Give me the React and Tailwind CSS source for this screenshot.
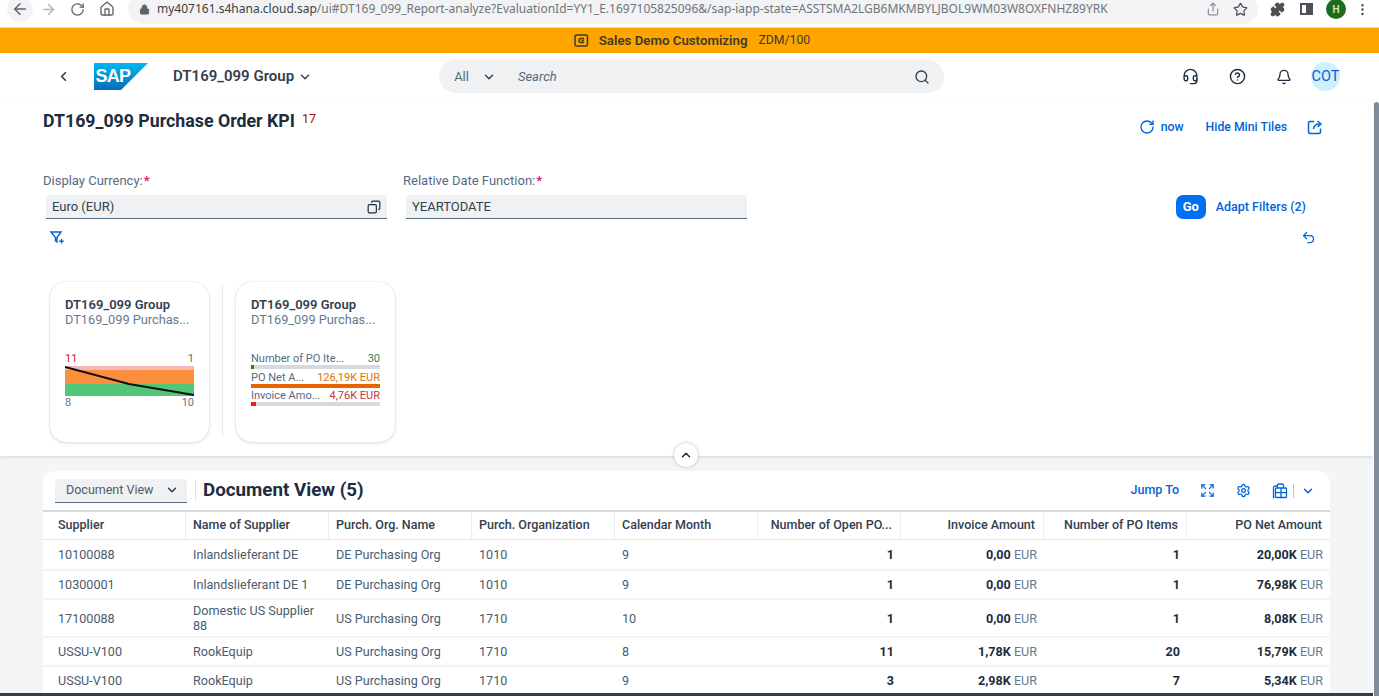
import { ChevronDown, ChevronLeft, ChevronUp, RotateCw, Search, Bell, CircleHelp, Headset, Undo2, Settings, Expand, Copy, ArrowLeft, ArrowRight, Home, Lock, Share, Star, Puzzle, MoreVertical } from 'lucide-react'

const COLUMNS = [
  { label: 'Supplier', w: 'w-[143px]' },
  { label: 'Name of Supplier', w: 'w-[143px]' },
  { label: 'Purch. Org. Name', w: 'w-[143px]' },
  { label: 'Purch. Organization', w: 'w-[143px]' },
  { label: 'Calendar Month', w: 'w-[143px]' },
  { label: 'Number of Open PO...', w: 'w-[143px]', right: true },
  { label: 'Invoice Amount', w: 'w-[143px]', right: true },
  { label: 'Number of PO Items', w: 'w-[143px]', right: true },
  { label: 'PO Net Amount', w: 'flex-1', right: true },
]

const ROWS = [
  { h: 'h-[31px]', cells: ['10100088', 'Inlandslieferant DE', 'DE Purchasing Org', '1010', '9', '1', '0,00', '1', '20,00K'] },
  { h: 'h-[29px]', cells: ['10300001', 'Inlandslieferant DE 1', 'DE Purchasing Org', '1010', '9', '1', '0,00', '1', '76,98K'] },
  { h: 'h-[38px]', cells: ['17100088', 'Domestic US Supplier 88', 'US Purchasing Org', '1710', '10', '1', '0,00', '1', '8,08K'] },
  { h: 'h-[29px]', cells: ['USSU-V100', 'RookEquip', 'US Purchasing Org', '1710', '8', '11', '1,78K', '20', '15,79K'] },
  { h: 'h-[29px]', cells: ['USSU-V100', 'RookEquip', 'US Purchasing Org', '1710', '9', '3', '2,98K', '7', '5,34K'] },
]

function SapLogo() {
  return (
    <svg width="54" height="27" viewBox="0 0 54 27">
      <defs>
        <linearGradient id="sapBlue" x1="0" y1="0" x2="0" y2="1">
          <stop offset="0" stopColor="#00b8f1" />
          <stop offset="1" stopColor="#0a6ab8" />
        </linearGradient>
      </defs>
      <polygon points="0,0 54,0 27,27 0,27" fill="url(#sapBlue)" />
      <text x="1.5" y="19" fill="#fff" fontSize="18" fontWeight="800" fontFamily="Liberation Sans, sans-serif" letterSpacing="-0.8">SAP</text>
    </svg>
  )
}

function BrowserBar() {
  return (
    <div className="h-[27px] bg-white overflow-hidden text-[#5f6368]">
      <div className="h-[18px] flex items-center">
        <div className="w-[26px] h-[26px] rounded-full bg-[#f1f3f4] ml-[7px] flex items-center justify-center shrink-0">
          <ArrowLeft size={18} />
        </div>
        <ArrowRight size={17} className="ml-[7px] text-[#b4b7bb] shrink-0" />
        <RotateCw size={15} className="ml-[13px] shrink-0" />
        <Home size={16} className="ml-[14px] shrink-0" />
        <div className="ml-[13px] w-[1130px] h-[30px] bg-[#f1f3f4] rounded-full flex items-center pl-[11px] pr-[10px] shrink-0">
          <Lock size={11} className="fill-[#5f6368] shrink-0" />
          <span className="ml-[7px] text-[12px] whitespace-nowrap text-[#3c4043] flex-1 overflow-hidden font-['Noto_Sans',sans-serif]">
            my407161.s4hana.cloud.sap<span className="text-[#70757a]">/ui#DT169_099_Report-analyze?EvaluationId=YY1_E.1697105825096&amp;/sap-iapp-state=ASSTSMA2LGB6MKMBYLJBOL9WM03W8OXFNHZ89YRK</span>
          </span>
          <Share size={14} className="text-[#8a8d91] shrink-0" />
          <Star size={15} className="ml-[13px] text-[#4d5156] shrink-0" />
        </div>
        <Puzzle size={15} className="ml-[12px] fill-[#4d5156] text-[#4d5156] shrink-0" />
        <div className="ml-[15px] w-[13px] h-[12px] border-2 border-[#4d5156] flex justify-end shrink-0">
          <div className="w-[5px] bg-[#4d5156]" />
        </div>
        <div className="ml-[13px] w-[20px] h-[20px] rounded-full bg-[#1e6b1e] text-[#cfe8cf] text-[10px] font-semibold flex items-center justify-center shrink-0">H</div>
        <MoreVertical size={15} className="ml-[9px] shrink-0 text-[#4d5156]" />
      </div>
    </div>
  )
}

function ShellBar() {
  return (
    <div className="h-[47px] flex items-center relative">
      <ChevronLeft size={15} strokeWidth={2.5} className="ml-[56px] text-[#32363a]" />
      <div className="ml-[23px]"><SapLogo /></div>
      <span className="ml-[25px] text-[15px] font-semibold text-[#32404f]">DT169_099 Group</span>
      <ChevronDown size={14} strokeWidth={2.5} className="ml-[4px] text-[#32404f]" />
      <div className="ml-[127px] w-[505px] h-[33px] rounded-full bg-[#eff1f2] flex items-center pl-[15px] pr-[14px] text-[#556b82] text-[13px]">
        <span>All</span>
        <ChevronDown size={14} strokeWidth={2.5} className="ml-[13px] text-[#32404f]" />
        <span className="ml-[22px] italic flex-1">Search</span>
        <Search size={16} className="text-[#32404f]" />
      </div>
      <div className="ml-auto flex items-center mr-[39px] text-[#1d2d3e]">
        <Headset size={17} />
        <CircleHelp size={17} className="ml-[30px]" />
        <Bell size={16} className="ml-[30px]" />
        <div className="ml-[19px] w-[29px] h-[29px] rounded-full bg-[#d1efff] text-[#0064d9] text-[14.5px] flex items-center justify-center">COT</div>
      </div>
    </div>
  )
}

function FilterField({ label, value, width, icon }) {
  return (
    <div style={{ width }}>
      <div className="text-[13px] text-[#556b82] leading-[16px]">
        {label}<span className="text-[#d6177c] font-bold ml-[1px]">*</span>
      </div>
      <div className="ml-[3px] mt-[6px] h-[24px] bg-[#eff1f2] rounded-t-[4px] border-b border-[#556b82] flex items-center pl-[6px] pr-[6px] text-[13px] text-[#32404f] justify-between">
        <span>{value}</span>
        {icon}
      </div>
    </div>
  )
}

function KpiTileOne() {
  return (
    <div className="mt-[25px]">
      <div className="flex justify-between text-[11px] leading-[13px]">
        <span className="text-[#d32030]">11</span>
        <span className="text-[#38854f]">1</span>
      </div>
      <svg width="129" height="30" viewBox="0 0 129 30" className="block mt-[1px]">
        <rect x="0" y="0" width="129" height="4" fill="#f5b8b8" />
        <rect x="0" y="4" width="129" height="14" fill="#fb8f3c" />
        <rect x="0" y="18" width="129" height="12" fill="#52c777" />
        <polyline points="0,1 64,18 129,29" fill="none" stroke="#111" strokeWidth="2" />
      </svg>
      <div className="flex justify-between text-[11px] leading-[13px] text-[#6a7682]">
        <span>8</span>
        <span>10</span>
      </div>
    </div>
  )
}

function MiniBar({ label, value, color, barColor, fill }) {
  return (
    <div className="mb-[1.5px]">
      <div className="flex justify-between text-[11px] leading-[13px] whitespace-nowrap">
        <span className="text-[#556b82]">{label}</span>
        <span style={{ color }}>{value}</span>
      </div>
      <div className="h-[4px] bg-[#d5dadf]">
        <div className="h-full" style={{ width: fill, background: barColor }} />
      </div>
    </div>
  )
}

function KpiTileTwo() {
  return (
    <div className="mt-[25px]">
      <MiniBar label="Number of PO Ite..." value="30" color="#38854f" barColor="#188918" fill="3px" />
      <MiniBar label="PO Net A..." value="126,19K EUR" color="#df6e0c" barColor="#e76500" fill="100%" />
      <MiniBar label="Invoice Amo..." value="4,76K EUR" color="#c7323c" barColor="#ee1c25" fill="5px" />
    </div>
  )
}

function Tile({ subtitle, children }) {
  return (
    <div className="w-[159px] h-[160px] rounded-[16px] bg-white shadow-[0_0_2px_rgba(85,107,130,0.3),0_2px_3px_rgba(85,107,130,0.12)] pt-[15px] px-[15px]">
      <div className="text-[13px] font-semibold text-[#32404f] leading-[15px]">DT169_099 Group</div>
      <div className="text-[12.75px] text-[#647a91] leading-[15px] whitespace-nowrap">{subtitle}</div>
      {children}
    </div>
  )
}

function ReportTable() {
  return (
    <div className="bg-white rounded-t-[12px] h-[222px] overflow-hidden">
      <div className="h-[39px] flex items-center pl-[12px] pr-[15px]">
        <div className="w-[132px] h-[24px] bg-[#eff1f2] rounded-t-[4px] border-b border-[#556b82] flex items-center justify-between pl-[11px] pr-[8px] text-[12.5px] text-[#4a5c6e]">
          <span>Document View</span>
          <ChevronDown size={14} strokeWidth={2.5} className="text-[#32404f]" />
        </div>
        <div className="w-px h-[20px] bg-[#dfe3e7] ml-[8px]" />
        <span className="ml-[7px] text-[18.75px] font-bold text-[#1d2d3e]">Document View (5)</span>
        <span className="ml-auto text-[12.5px] font-medium text-[#0064d9]">Jump To</span>
        <Expand size={15} className="ml-[21px] text-[#0064d9]" />
        <Settings size={15} className="ml-[21px] text-[#0064d9]" />
        <svg width="16" height="16" viewBox="0 0 16 16" className="ml-[21px]" fill="none" stroke="#0064d9" strokeWidth="1.3">
          <path d="M2.5 14.5H1.5V5a2 2 0 0 1 2-2h2" />
          <path d="M5.5 5V2.5A1.5 1.5 0 0 1 7 1h3a1.5 1.5 0 0 1 1.5 1.5V5" />
          <rect x="3.5" y="5" width="11" height="9.5" rx="1" />
          <path d="M3.5 9.7h11M9 5v9.5" />
        </svg>
        <div className="w-px h-[14px] bg-[#a8c8ee] ml-[5px]" />
        <ChevronDown size={14} strokeWidth={2.5} className="ml-[7px] text-[#0064d9]" />
      </div>
      <div className="h-[30px] flex border-t-2 border-[#d5dadd] border-b border-b-[#e5e8ea] text-[12.5px] font-medium text-[#32404f]">
        {COLUMNS.map((col, i) => (
          <div key={col.label} className={`${col.w} flex items-center whitespace-nowrap pb-[1px] ${i === 0 ? 'pl-[15px]' : 'pl-[7px]'} pr-[8px] ${col.right ? 'justify-end' : ''} ${i < 8 ? 'border-r border-[#eceef0]' : ''}`}>
            {col.label}
          </div>
        ))}
      </div>
      {ROWS.map(row => (
        <div key={row.cells[0] + row.cells[4]} className={`${row.h} flex border-b-2 border-[#f2f4f5] text-[12.6px] text-[#4a5c6e]`}>
          {row.cells.map((cell, i) => (
            <div key={i} className={`${COLUMNS[i].w} flex items-center ${i === 0 ? 'pl-[15px]' : 'pl-[7px]'} pr-[7px] leading-[15px] ${COLUMNS[i].right ? 'justify-end' : ''}`}>
              {i >= 5 ? (
                <span className="text-[#1d2d3e] font-bold">
                  {cell}
                  {(i === 6 || i === 8) && <span className="font-normal text-[#647a91]"> EUR</span>}
                </span>
              ) : cell}
            </div>
          ))}
        </div>
      ))}
    </div>
  )
}

export default function App() {
  return (
    <div className="w-[1379px] h-[696px] overflow-hidden flex flex-col bg-white font-['Roboto',sans-serif]">
      <BrowserBar />
      <div className="h-[26px] bg-[#ffa500] border-t border-[#f5d9a8] pl-[5px] flex items-center justify-center text-[13.25px] text-[#3f3a28]">
        <svg width="15" height="15" viewBox="0 0 15 15" className="mr-[10px]" fill="none" stroke="#3f3a28" strokeWidth="1.5">
          <rect x="1" y="2" width="12.5" height="11" rx="1.5" />
          <path d="M10 5.5H7a2 2 0 0 0 0 4h3M10 7.5H7.5" />
        </svg>
        <span className="font-semibold">Sales Demo Customizing</span>
        <span className="ml-[11px] text-[12.25px]">ZDM/100</span>
      </div>
      <ShellBar />
      <div className="flex flex-1 min-h-0">
        <div className="w-[1373px] flex flex-col">
          <div className="h-[356px] pl-[43px] relative shadow-[0_1px_3px_rgba(85,107,130,0.2)] z-10 bg-white">
            <div className="h-[73px] flex">
              <div className="flex items-start pt-[10px]">
                <span className="text-[17.75px] font-bold text-[#1d2d3e] leading-[22px]">DT169_099 Purchase Order KPI</span>
                <span className="ml-[7px] mt-[1px] text-[12.5px] text-[#aa0808] leading-[16px]">17</span>
              </div>
              <div className="ml-auto mr-[50px] mt-[17px] h-[20px] flex items-center text-[12.25px] font-medium text-[#0064d9]">
                <RotateCw size={16} />
                <span className="ml-[6px]">now</span>
                <span className="ml-[22px]">Hide Mini Tiles</span>
                <svg width="16" height="16" viewBox="0 0 16 16" className="ml-[20px]" fill="none" stroke="#0064d9" strokeWidth="1.5">
                  <path d="M7 2.5H3A1.5 1.5 0 0 0 1.5 4v9A1.5 1.5 0 0 0 3 14.5h9a1.5 1.5 0 0 0 1.5-1.5V9.5" />
                  <path d="M6.5 10c.3-3 2.5-5 6-5M10.5 2l3.5 3-3.5 3" />
                </svg>
              </div>
            </div>
            <div className="flex items-start pr-[67px]">
              <FilterField label="Display Currency:" value="Euro (EUR)" width="344px" icon={<Copy size={14} className="text-[#1d2d3e] -scale-x-100" />} />
              <div className="ml-[16px]">
                <FilterField label="Relative Date Function:" value="YEARTODATE" width="344px" />
              </div>
              <div className="ml-auto mt-[22px] flex items-center">
                <div className="w-[30px] h-[24px] rounded-[7px] bg-[#0070f2] text-white text-[13px] font-bold flex items-center justify-center">Go</div>
                <span className="ml-[10px] text-[12.5px] font-medium text-[#0064d9]">Adapt Filters (2)</span>
              </div>
            </div>
            <div className="flex items-center h-[24px] pr-[57px] mt-[6px]">
              <svg width="16" height="16" viewBox="0 0 16 16" className="ml-[6px]" fill="none" stroke="#0064d9" strokeWidth="1.4">
                <path d="M2 3h10L8 8.5V13L6.5 12V8.5z" />
                <path d="M12.5 10v4.5M10.2 12.2h4.5" />
              </svg>
              <Undo2 size={15} className="ml-auto text-[#0064d9]" />
            </div>
            <div className="flex mt-[33px] ml-[7px]">
              <Tile subtitle="DT169_099 Purchas..."><KpiTileOne /></Tile>
              <div className="w-px h-[150px] mt-[4px] ml-[13px] mr-[13px] bg-[#e7eaec]" />
              <Tile subtitle="DT169_099 Purchas..."><KpiTileTwo /></Tile>
            </div>
            <div className="absolute left-[674px] bottom-[-11px] w-[24px] h-[24px] rounded-full bg-white shadow-[0_0_3px_rgba(85,107,130,0.5)] flex items-center justify-center">
              <ChevronUp size={14} strokeWidth={2.5} className="text-[#1d2d3e]" />
            </div>
          </div>
          <div className="flex-1 bg-[#f3f5f6] pl-[43px] pr-[43px] pt-[15px]">
            <ReportTable />
          </div>
          <div className="h-[3px] bg-[#3a3d40]" />
        </div>
        <div className="ml-[1px] flex-1 mt-[2px] bg-[#7f8c99] rounded-t-[3px]" />
      </div>
    </div>
  )
}
